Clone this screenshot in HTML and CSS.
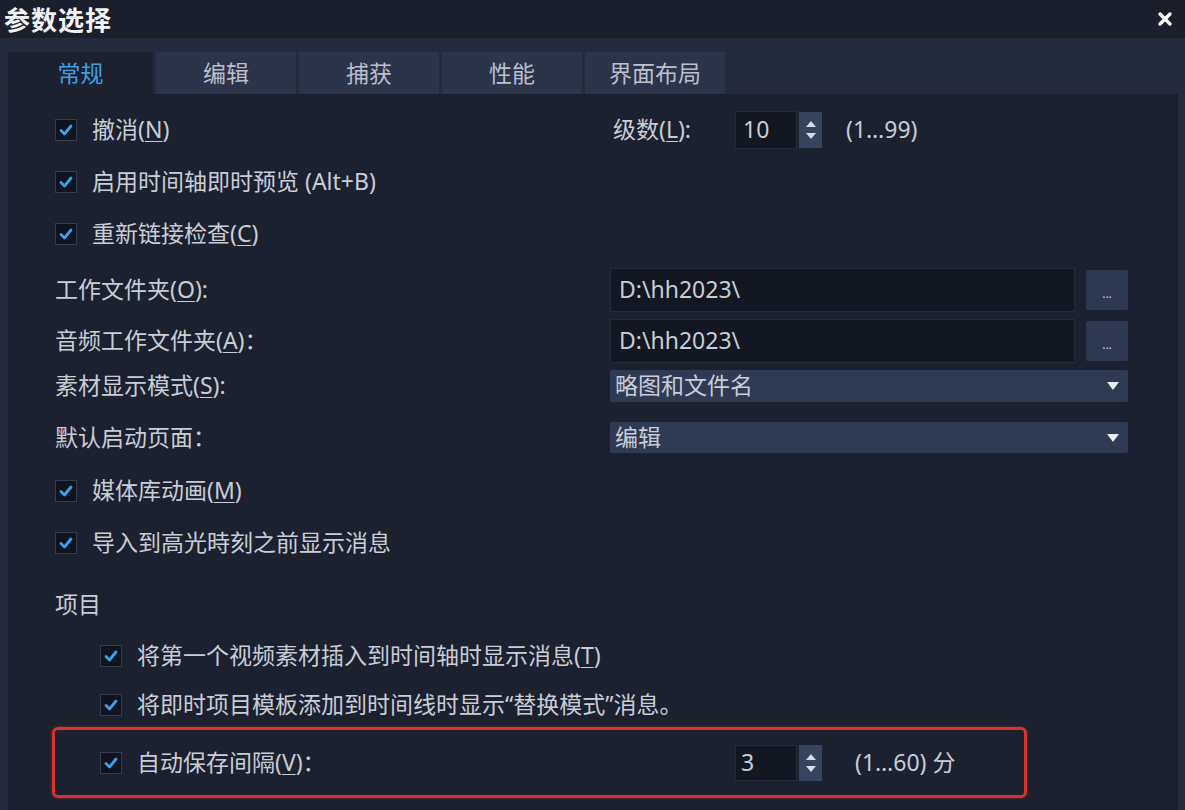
FILE: index.html
```html
<!DOCTYPE html>
<html lang="zh-CN">
<head>
  <meta charset="UTF-8">
  <title>参数选择</title>
  <link rel="stylesheet" href="styles.css">
</head>
<body>
  <!-- Title bar -->
  <header class="titlebar">
    <span class="title">参数选择</span>
    <svg class="close" width="16" height="16" viewBox="0 0 16 16">
      <path d="M3 3 L13 13 M13 3 L3 13" stroke="#ffffff" stroke-width="3.4" stroke-linecap="round"/>
    </svg>
  </header>

  <!-- Tabs -->
  <nav class="tabs">
    <div class="tab active">常规</div>
    <div class="tab">编辑</div>
    <div class="tab">捕获</div>
    <div class="tab">性能</div>
    <div class="tab">界面布局</div>
  </nav>

  <main class="panel">
    <div class="row r-check">
      <label class="check left">
        <span class="box"><svg width="14" height="12" viewBox="0 0 14 12"><path d="M2 6.5 L5.5 10 L12 2" fill="none" stroke="#3aa2ea" stroke-width="2.8" stroke-linecap="round" stroke-linejoin="round"/></svg></span>
        撤消(<u>N</u>)
      </label>
      <div class="level">
        <span class="level-label">级数(<u>L</u>):</span>
        <div class="spin">
          <span class="spin-val">10</span>
          <span class="spin-btn">
            <svg width="12" height="26" viewBox="0 0 12 26"><path d="M1 10 L6 4 L11 10 Z M1 16 L6 22 L11 16 Z" fill="#d6dbe6"/></svg>
          </span>
        </div>
        <span class="range">(1…99)</span>
      </div>
    </div>

    <div class="row r-check">
      <label class="check">
        <span class="box"><svg width="14" height="12" viewBox="0 0 14 12"><path d="M2 6.5 L5.5 10 L12 2" fill="none" stroke="#3aa2ea" stroke-width="2.8" stroke-linecap="round" stroke-linejoin="round"/></svg></span>
        启用时间轴即时预览 (Alt+B)
      </label>
    </div>

    <div class="row r-check">
      <label class="check">
        <span class="box"><svg width="14" height="12" viewBox="0 0 14 12"><path d="M2 6.5 L5.5 10 L12 2" fill="none" stroke="#3aa2ea" stroke-width="2.8" stroke-linecap="round" stroke-linejoin="round"/></svg></span>
        重新链接检查(<u>C</u>)
      </label>
    </div>

    <div class="row r-field first-field">
      <span class="left">工作文件夹(<u>O</u>):</span>
      <div class="input">D:\hh2023\</div>
      <div class="browse">...</div>
    </div>

    <div class="row r-field">
      <span class="left">音频工作文件夹(<u>A</u>)：</span>
      <div class="input">D:\hh2023\</div>
      <div class="browse">...</div>
    </div>

    <div class="row r-select">
      <span class="left">素材显示模式(<u>S</u>):</span>
      <div class="select">略图和文件名<span class="arrow"></span></div>
    </div>

    <div class="row r-select second-select">
      <span class="left">默认启动页面：</span>
      <div class="select">编辑<span class="arrow"></span></div>
    </div>

    <div class="row r-check after-select">
      <label class="check">
        <span class="box"><svg width="14" height="12" viewBox="0 0 14 12"><path d="M2 6.5 L5.5 10 L12 2" fill="none" stroke="#3aa2ea" stroke-width="2.8" stroke-linecap="round" stroke-linejoin="round"/></svg></span>
        媒体库动画(<u>M</u>)
      </label>
    </div>

    <div class="row r-check">
      <label class="check">
        <span class="box"><svg width="14" height="12" viewBox="0 0 14 12"><path d="M2 6.5 L5.5 10 L12 2" fill="none" stroke="#3aa2ea" stroke-width="2.8" stroke-linecap="round" stroke-linejoin="round"/></svg></span>
        导入到高光時刻之前显示消息
      </label>
    </div>

    <div class="row r-check section">项目</div>

    <div class="row r-check sub">
      <label class="check">
        <span class="box"><svg width="14" height="12" viewBox="0 0 14 12"><path d="M2 6.5 L5.5 10 L12 2" fill="none" stroke="#3aa2ea" stroke-width="2.8" stroke-linecap="round" stroke-linejoin="round"/></svg></span>
        将第一个视频素材插入到时间轴时显示消息(<u>T</u>)
      </label>
    </div>

    <div class="row r-check sub r-last">
      <label class="check">
        <span class="box"><svg width="14" height="12" viewBox="0 0 14 12"><path d="M2 6.5 L5.5 10 L12 2" fill="none" stroke="#3aa2ea" stroke-width="2.8" stroke-linecap="round" stroke-linejoin="round"/></svg></span>
        将即时项目模板添加到时间线时显示“替换模式”消息。
      </label>
    </div>

    <!-- Highlighted autosave row -->
    <div class="highlight">
      <label class="check autosave-label">
        <span class="box"><svg width="14" height="12" viewBox="0 0 14 12"><path d="M2 6.5 L5.5 10 L12 2" fill="none" stroke="#3aa2ea" stroke-width="2.8" stroke-linecap="round" stroke-linejoin="round"/></svg></span>
        自动保存间隔(<u>V</u>)：
      </label>
      <div class="spin small">
        <span class="spin-val">3</span>
        <span class="spin-btn">
          <svg width="12" height="26" viewBox="0 0 12 26"><path d="M1 10 L6 4 L11 10 Z M1 16 L6 22 L11 16 Z" fill="#d6dbe6"/></svg>
        </span>
      </div>
      <span class="range wide">(1…60) 分</span>
    </div>
  </main>
</body>
</html>
```

FILE: styles.css
```css
/* General Reset */
* {
  margin: 0;
  padding: 0;
  box-sizing: border-box;
}

html, body {
  height: 100%;
  overflow: hidden;
}

body {
  background-color: #232a3c;
  font-family: "Noto Sans", "Noto Sans CJK SC", sans-serif;
  font-size: 23px;
  line-height: 1.2;
  color: #c9cdd6;
  display: flex;
  flex-direction: column;
}

u {
  text-underline-offset: 3px;
  text-decoration-thickness: 1px;
}

/* Title Bar */
.titlebar {
  height: 38px;
  background-color: #1b1e2b;
  display: flex;
  align-items: center;
  justify-content: space-between;
  padding: 0 12px 0 4px;
}

.title {
  font-family: "Noto Sans CJK SC", sans-serif;
  font-size: 26px;
  font-weight: bold;
  color: #f2f3f6;
  letter-spacing: 1px;
}

/* Tabs */
.tabs {
  display: flex;
  gap: 3px;
  padding: 14px 0 0 8px;
}

.tab {
  width: 140px;
  height: 42px;
  background-color: #2b3449;
  color: #b9bfcc;
  font-family: "Noto Sans CJK SC", sans-serif;
  font-size: 23px;
  display: flex;
  align-items: center;
  justify-content: center;
}

.tab.active {
  width: 145px;
  background-color: #1c2130;
  color: #3f9fe2;
}

/* Main Panel */
.panel {
  flex: 1;
  margin: 0 7px 0 8px;
  background-color: #1c2130;
  border-top: 1px solid #191d2a;
  border-right: 2px solid #1a1e2b;
  padding: 9px 48px 0 47px;
  display: flex;
  flex-direction: column;
}

.row {
  display: flex;
  align-items: center;
}

.r-check { height: 52px; }
.r-field { height: 44px; margin-top: 7px; }
.r-field.first-field { margin-top: 8px; }
.r-select { height: 32px; margin-top: 7px; }
.r-select.second-select { margin-top: 20px; height: 31px; }
.after-select { margin-top: 12px; }
.section { margin-top: 11px; height: 50px; }
.sub { padding-left: 45px; }
.r-last { height: 45px; }

.left {
  width: 555px;
  flex-shrink: 0;
}

/* Checkbox */
.check {
  display: flex;
  align-items: center;
}

.box {
  width: 22px;
  height: 22px;
  margin-right: 15px;
  border: 1px solid #343c51;
  background-color: #10141f;
  display: flex;
  align-items: center;
  justify-content: center;
}

/* Level spinner */
.level {
  display: flex;
  align-items: center;
  padding-left: 3px;
}

.level-label {
  width: 122px;
}

.spin {
  display: flex;
  align-items: center;
  gap: 2px;
}

.spin-val {
  width: 62px;
  height: 38px;
  background-color: #131722;
  border: 1px solid #252b3b;
  padding-left: 7px;
  display: flex;
  align-items: center;
}

.spin-btn {
  width: 23px;
  height: 36px;
  background-color: #38435d;
  display: flex;
  align-items: center;
  justify-content: center;
}

.spin.small .spin-val {
  height: 36px;
  padding-left: 5px;
}

.range {
  margin-left: 24px;
}

.range.wide {
  margin-left: 33px;
}

/* Inputs */
.input {
  width: 465px;
  height: 44px;
  background-color: #131722;
  border: 1px solid #262c3c;
  padding-left: 8px;
  display: flex;
  align-items: center;
}

.browse {
  width: 42px;
  height: 40px;
  margin-left: 11px;
  background-color: #2e3850;
  border-radius: 2px;
  color: #c9cdd6;
  font-size: 12px;
  display: flex;
  align-items: flex-end;
  justify-content: center;
  padding-bottom: 9px;
}

/* Selects */
.select {
  width: 518px;
  height: 100%;
  background-color: #2f3a53;
  border-radius: 2px;
  padding-left: 5px;
  display: flex;
  align-items: center;
  justify-content: space-between;
  padding-right: 9px;
}

.arrow {
  width: 0;
  height: 0;
  border-left: 6px solid transparent;
  border-right: 6px solid transparent;
  border-top: 8px solid #e8ebf0;
}

/* Red highlight box */
.highlight {
  width: 975px;
  height: 71px;
  margin-left: -3px;
  border: 3px solid #d8332c;
  border-radius: 6px;
  box-shadow: 0 0 3px rgba(216, 51, 44, 0.6);
  display: flex;
  align-items: center;
  padding-left: 45px;
}

.autosave-label {
  width: 635px;
}
```
